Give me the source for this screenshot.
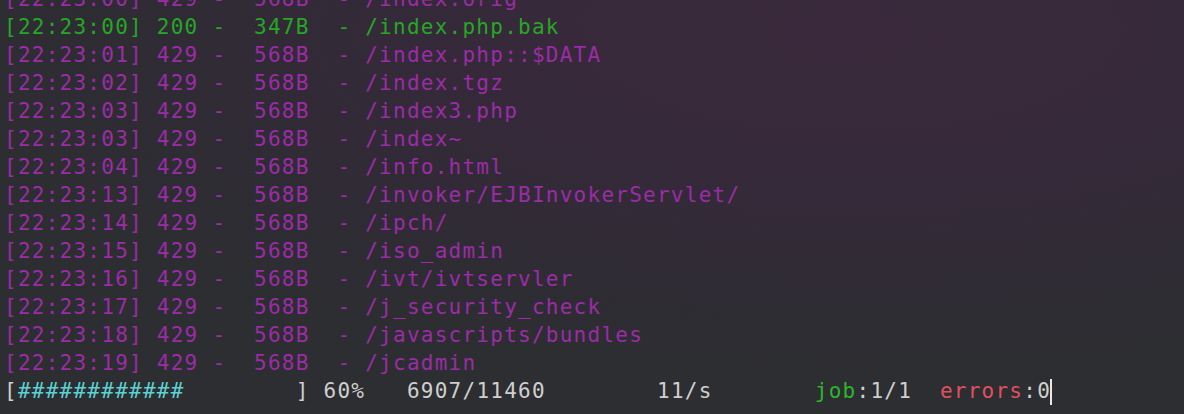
import React from 'react';

type Row = { time: string; code: string; size: string; path: string; ok?: boolean };

const rows: Row[] = [
  { time: '22:23:00', code: '429', size: '568B', path: '/index.orig' },
  { time: '22:23:00', code: '200', size: '347B', path: '/index.php.bak', ok: true },
  { time: '22:23:01', code: '429', size: '568B', path: '/index.php::$DATA' },
  { time: '22:23:02', code: '429', size: '568B', path: '/index.tgz' },
  { time: '22:23:03', code: '429', size: '568B', path: '/index3.php' },
  { time: '22:23:03', code: '429', size: '568B', path: '/index~' },
  { time: '22:23:04', code: '429', size: '568B', path: '/info.html' },
  { time: '22:23:13', code: '429', size: '568B', path: '/invoker/EJBInvokerServlet/' },
  { time: '22:23:14', code: '429', size: '568B', path: '/ipch/' },
  { time: '22:23:15', code: '429', size: '568B', path: '/iso_admin' },
  { time: '22:23:16', code: '429', size: '568B', path: '/ivt/ivtservler' },
  { time: '22:23:17', code: '429', size: '568B', path: '/j_security_check' },
  { time: '22:23:18', code: '429', size: '568B', path: '/javascripts/bundles' },
  { time: '22:23:19', code: '429', size: '568B', path: '/jcadmin' },
];

export default function App() {
  return (
    <div className="h-[414px] w-[1184px] overflow-hidden bg-[#2c2e31] bg-[radial-gradient(ellipse_90%_95%_at_72%_8%,#3a293c_0%,#36293a_35%,#302b35_60%,#2c2e31_90%)]">
      <div className="-mt-[15px] pl-[4px] font-['DejaVu_Sans_Mono',monospace] text-[21px] leading-[28px] tracking-[1.25px] whitespace-pre">
        {rows.map((r, i) => (
          <div key={i} className={r.ok ? 'text-[#26a626]' : 'text-[#9a2ca6]'}>
            {`[${r.time}] ${r.code} -  ${r.size}  - ${r.path}`}
          </div>
        ))}
        {/* 진행 상태 줄 */}
        <div className="text-[#cfcfcf]">
          <span>[</span>
          <span className="text-[#5cd2d4]">############</span>
          <span>{'        ] 60%   6907/11460        11/s       '}</span>
          <span className="ml-[5px] text-[#2cb52c]">job</span>
          <span>{':1/1  '}</span>
          <span className="text-[#e0505f]">errors</span>
          <span>:0</span>
          <span className="inline-block h-[26px] w-[2px] bg-[#e8e8e8] align-middle -ml-[1px]" />
        </div>
      </div>
    </div>
  );
}
